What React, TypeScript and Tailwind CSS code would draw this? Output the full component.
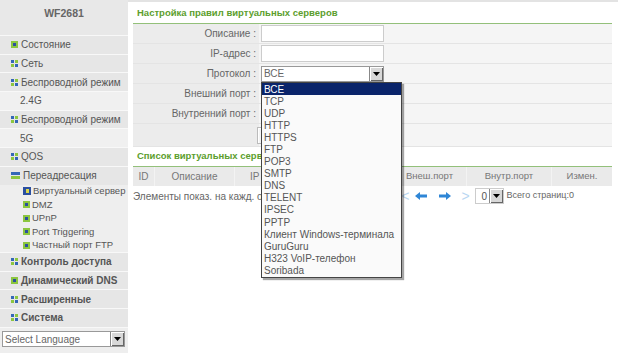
import React from "react";

type NavItem = { label: string; icon?: "dot" | "grid" | "bars" | "page"; level: 0 | 1 | 2; bold?: boolean };

const nav: NavItem[] = [
  { label: "Состояние", icon: "dot", level: 0 },
  { label: "Сеть", icon: "grid", level: 0 },
  { label: "Беспроводной режим", icon: "grid", level: 0 },
  { label: "2.4G", level: 1 },
  { label: "Беспроводной режим", icon: "grid", level: 0 },
  { label: "5G", level: 1 },
  { label: "QOS", icon: "grid", level: 0 },
  { label: "Переадресация", icon: "bars", level: 0 },
  { label: "Виртуальный сервер", icon: "page", level: 2 },
  { label: "DMZ", icon: "dot", level: 2 },
  { label: "UPnP", icon: "dot", level: 2 },
  { label: "Port Triggering", icon: "dot", level: 2 },
  { label: "Частный порт FTP", icon: "dot", level: 2 },
  { label: "Контроль доступа", icon: "grid", level: 0, bold: true },
  { label: "Динамический DNS", icon: "dot", level: 0, bold: true },
  { label: "Расширенные", icon: "grid", level: 0, bold: true },
  { label: "Система", icon: "grid", level: 0, bold: true },
];

const protocols = [
  "ВСЕ",
  "TCP",
  "UDP",
  "HTTP",
  "HTTPS",
  "FTP",
  "POP3",
  "SMTP",
  "DNS",
  "TELENT",
  "IPSEC",
  "PPTP",
  "Клиент Windows-терминала",
  "GuruGuru",
  "H323 VoIP-телефон",
  "Soribada",
];

function NavIcon({ kind }: { kind: NavItem["icon"] }) {
  if (kind === "dot")
    return (
      <span className="flex h-[7px] w-[7px] shrink-0 items-center justify-center bg-[#8cc63f]">
        <span className="h-[3px] w-[3px] bg-[#2b4fa0]" />
      </span>
    );
  if (kind === "grid")
    return (
      <span className="grid h-[7px] w-[7px] shrink-0 grid-cols-2 gap-px">
        <span className="bg-[#3467b6]" />
        <span className="bg-[#8cc63f]" />
        <span className="bg-[#8cc63f]" />
        <span className="bg-[#3467b6]" />
      </span>
    );
  if (kind === "bars")
    return (
      <span className="flex h-[7px] w-[9px] shrink-0 flex-col gap-px">
        <span className="h-[3px] bg-[#3467b6]" />
        <span className="h-[3px] bg-[#8cc63f]" />
      </span>
    );
  return (
    <span className="flex h-[8px] w-[8px] shrink-0 items-center justify-center bg-[#2b4fa0]">
      <span className="h-[4px] w-[3px] bg-[#d9d64a]" />
    </span>
  );
}

function DropArrow() {
  return (
    <span className="flex h-full w-[14px] items-center justify-center border-l border-[#888] bg-[#d8d8d8] shadow-[inset_1px_1px_0_#fff,inset_-1px_-1px_0_#666]">
      <svg width="7" height="4" viewBox="0 0 7 4">
        <path d="M0 0h7L3.5 4z" fill="#000" />
      </svg>
    </span>
  );
}

function Sidebar() {
  return (
    <aside className="flex w-[128px] shrink-0 flex-col bg-[#eeeeee] text-[10px] text-[#555]">
      <div className="flex h-[35px] justify-center bg-[#e8e8e8] pt-[6px] text-[10.5px] font-bold text-[#666]">
        WF2681
      </div>
      {nav.map((item, i) => {
        if (item.level === 2)
          return (
            <div key={i} className="flex h-[13.5px] items-center gap-[2px] whitespace-nowrap pl-[23px] text-[9.5px]">
              <NavIcon kind={item.icon} />
              <span>{item.label}</span>
            </div>
          );
        return (
          <div
            key={i}
            className={`flex h-[18.7px] items-center gap-[3px] whitespace-nowrap border-t border-[#f8f8f8] ${
              item.level === 1 ? "bg-[#f0f0f0] pl-[20px]" : "bg-[#e6e6e6] pl-[11px]"
            } ${item.bold ? "font-bold" : ""}`}
          >
            {item.icon && <NavIcon kind={item.icon} />}
            <span>{item.label}</span>
          </div>
        );
      })}
      <div className="flex h-[24px] items-center border-t border-[#f8f8f8] px-[2px]">
        <div className="flex h-[16px] w-[123px] items-center justify-between border border-[#999] bg-white">
          <span className="pl-[2px] text-[10px] text-[#666]">Select Language</span>
          <DropArrow />
        </div>
      </div>
    </aside>
  );
}

function FormRow({ label, children, h = "h-[20px]" }: { label: string; children?: React.ReactNode; h?: string }) {
  return (
    <div className={`flex ${h} border-b border-[#e4e4e4]`}>
      <div className="flex w-[126px] items-center justify-end whitespace-nowrap bg-[#ececec] pr-[3px] text-[#666]">{label}</div>
      <div className="flex flex-1 items-center bg-[#f5f5f5] pl-[2px]">{children}</div>
    </div>
  );
}

function TextInput() {
  return <div className="h-[17px] w-[123px] border border-[#ccc] bg-white" />;
}

function SectionTitle({ children, h }: { children: React.ReactNode; h: string }) {
  return (
    <div className={`flex ${h} items-end whitespace-nowrap border-b border-[#93c07a] pb-[3px] pl-[4px] text-[9.5px] font-bold text-[#5c9e2d]`}>
      {children}
    </div>
  );
}

function BlueArrow({ dir }: { dir: "left" | "right" }) {
  return (
    <svg width="12" height="8" viewBox="0 0 12 8" className={dir === "right" ? "-scale-x-100" : ""}>
      <path d="M0 4L5 0v2.5h7v3H5V8z" fill="#2f86d6" />
    </svg>
  );
}

export default function App() {
  return (
    <div className="flex h-[353px] w-[618px] overflow-hidden bg-white font-['Liberation_Sans',Arial,sans-serif] text-[10px]">
      <Sidebar />
      <main className="relative flex flex-1 flex-col border-t-[2px] border-[#e3e3e3] pl-[5px] pr-[6px]">
        <SectionTitle h="h-[22px]">Настройка правил виртуальных серверов</SectionTitle>
        <FormRow label="Описание :">
          <TextInput />
        </FormRow>
        <FormRow label="IP-адрес :">
          <TextInput />
        </FormRow>
        <FormRow label="Протокол :">
          <div className="flex h-[16px] w-[123px] items-center justify-between border border-[#999] bg-white">
            <span className="pl-[2px] text-[#666]">ВСЕ</span>
            <DropArrow />
          </div>
        </FormRow>
        <FormRow label="Внешний порт :" />
        <FormRow label="Внутренний порт :" />
        <FormRow label="" h="h-[23px]">
          <div className="-ml-[4px] h-[17px] w-[50px] border border-[#bbb] bg-[#f4f4f4] shadow-[inset_1px_1px_0_#fff]" />
        </FormRow>

        <SectionTitle h="h-[20px]">Список виртуальных серверов</SectionTitle>
        <div className="flex h-[19px] bg-[#eaeaea] text-[9.5px] text-[#777]">
          <div className="flex w-[22px] items-center justify-center border-r border-[#f3f3f3] text-[10px]">ID</div>
          <div className="flex w-[80px] items-center justify-center border-r border-[#f3f3f3] text-[10px]">Описание</div>
          <div className="flex w-[80px] items-center border-r border-[#f3f3f3] pl-[15px] text-[10px]">IP</div>
          <div className="w-[78px] border-r border-[#f3f3f3]" />
          <div className="flex w-[74px] items-center justify-center border-r border-[#f3f3f3]">Внеш.порт</div>
          <div className="flex w-[85px] items-center justify-center border-r border-[#f3f3f3]">Внутр.порт</div>
          <div className="flex flex-1 items-center justify-center">Измен.</div>
        </div>
        <div className="flex h-[20px] items-center text-[#666]">
          <span className="whitespace-nowrap">Элементы показ. на кажд. отд</span>
          <div className="ml-auto flex items-center pr-[38px] text-[9px]">
            <span className="text-[14px] leading-none text-[#b9d7f2]">&lt;</span>
            <span className="ml-[6px]">
              <BlueArrow dir="left" />
            </span>
            <span className="ml-[12px]">
              <BlueArrow dir="right" />
            </span>
            <span className="ml-[10px] text-[14px] leading-none text-[#b9d7f2]">&gt;</span>
            <div className="ml-[5px] flex items-center gap-[3px]">
              <div className="flex h-[16px] w-[29px] items-center justify-between border border-[#ccc] bg-white">
                <span className="pl-[6px] text-[10px] text-[#555]">0</span>
                <DropArrow />
              </div>
              <span className="whitespace-nowrap">Всего страниц:0</span>
            </div>
          </div>
        </div>

        <ul className="absolute left-[133px] top-[80px] w-[141px] border border-[#444] bg-[#fafafa] text-[10px] text-[#555] shadow-[2px_2px_1px_rgba(0,0,0,0.35)]">
          {protocols.map((p, i) => (
            <li
              key={p}
              className={`flex h-[12.1px] items-center whitespace-nowrap pl-[2px] ${i === 0 ? "bg-[#0a246a] text-white" : ""}`}
            >
              {p}
            </li>
          ))}
        </ul>
      </main>
    </div>
  );
}
